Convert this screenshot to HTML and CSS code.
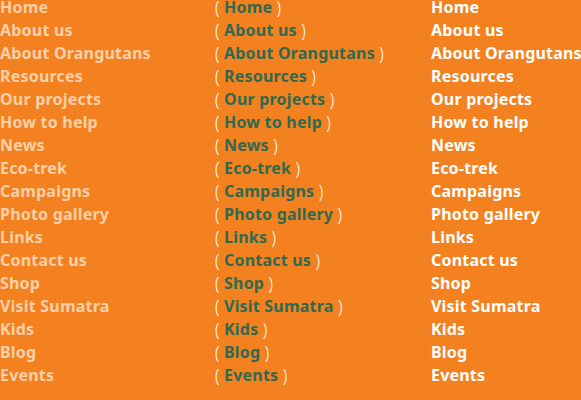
FILE: index.html
```
<!DOCTYPE html>
<html lang="en">
<head>
<meta charset="utf-8">
<title>Sitemap</title>
<link rel="stylesheet" href="styles.css">
</head>
<body>
<div class="cols">
  <ul class="list list-a">
    <li><a href="#">Home</a></li>
    <li><a href="#">About us</a></li>
    <li><a href="#">About Orangutans</a></li>
    <li><a href="#">Resources</a></li>
    <li><a href="#">Our projects</a></li>
    <li><a href="#">How to help</a></li>
    <li><a href="#">News</a></li>
    <li><a href="#">Eco-trek</a></li>
    <li><a href="#">Campaigns</a></li>
    <li><a href="#">Photo gallery</a></li>
    <li><a href="#">Links</a></li>
    <li><a href="#">Contact us</a></li>
    <li><a href="#">Shop</a></li>
    <li><a href="#">Visit Sumatra</a></li>
    <li><a href="#">Kids</a></li>
    <li><a href="#">Blog</a></li>
    <li><a href="#">Events</a></li>
  </ul>
  <ul class="list list-b">
    <li><span class="p">(</span> <a href="#">Home</a> <span class="p">)</span></li>
    <li><span class="p">(</span> <a href="#">About us</a> <span class="p">)</span></li>
    <li><span class="p">(</span> <a href="#">About Orangutans</a> <span class="p">)</span></li>
    <li><span class="p">(</span> <a href="#">Resources</a> <span class="p">)</span></li>
    <li><span class="p">(</span> <a href="#">Our projects</a> <span class="p">)</span></li>
    <li><span class="p">(</span> <a href="#">How to help</a> <span class="p">)</span></li>
    <li><span class="p">(</span> <a href="#">News</a> <span class="p">)</span></li>
    <li><span class="p">(</span> <a href="#">Eco-trek</a> <span class="p">)</span></li>
    <li><span class="p">(</span> <a href="#">Campaigns</a> <span class="p">)</span></li>
    <li><span class="p">(</span> <a href="#">Photo gallery</a> <span class="p">)</span></li>
    <li><span class="p">(</span> <a href="#">Links</a> <span class="p">)</span></li>
    <li><span class="p">(</span> <a href="#">Contact us</a> <span class="p">)</span></li>
    <li><span class="p">(</span> <a href="#">Shop</a> <span class="p">)</span></li>
    <li><span class="p">(</span> <a href="#">Visit Sumatra</a> <span class="p">)</span></li>
    <li><span class="p">(</span> <a href="#">Kids</a> <span class="p">)</span></li>
    <li><span class="p">(</span> <a href="#">Blog</a> <span class="p">)</span></li>
    <li><span class="p">(</span> <a href="#">Events</a> <span class="p">)</span></li>
  </ul>
  <ul class="list list-c">
    <li><a href="#">Home</a></li>
    <li><a href="#">About us</a></li>
    <li><a href="#">About Orangutans</a></li>
    <li><a href="#">Resources</a></li>
    <li><a href="#">Our projects</a></li>
    <li><a href="#">How to help</a></li>
    <li><a href="#">News</a></li>
    <li><a href="#">Eco-trek</a></li>
    <li><a href="#">Campaigns</a></li>
    <li><a href="#">Photo gallery</a></li>
    <li><a href="#">Links</a></li>
    <li><a href="#">Contact us</a></li>
    <li><a href="#">Shop</a></li>
    <li><a href="#">Visit Sumatra</a></li>
    <li><a href="#">Kids</a></li>
    <li><a href="#">Blog</a></li>
    <li><a href="#">Events</a></li>
  </ul>
</div>
</body>
</html>
```
FILE: styles.css
```
html, body {
  margin: 0;
  padding: 0;
  background: #f48120;
  height: 100%;
}
body {
  font-family: "Noto Sans", "Open Sans", "DejaVu Sans", sans-serif;
  font-size: 16px;
  font-weight: 700;
}
.cols {
  display: grid;
  grid-template-columns: 215px 216px 1fr;
  margin-top: -4px;
}
.list {
  list-style: none;
  margin: 0;
  padding: 0;
  line-height: 23px;
  white-space: nowrap;
  letter-spacing: 0.2px;
}
.list a {
  text-decoration: none;
}
.list-a a {
  color: #fcd0a9;
}
.list-b a {
  color: #2f6a50;
}
.list-b .p {
  color: #fff;
  font-weight: 300;
  display: inline-block;
  transform: scaleY(1.1);
}
.list-c a {
  color: #fff;
}
```
